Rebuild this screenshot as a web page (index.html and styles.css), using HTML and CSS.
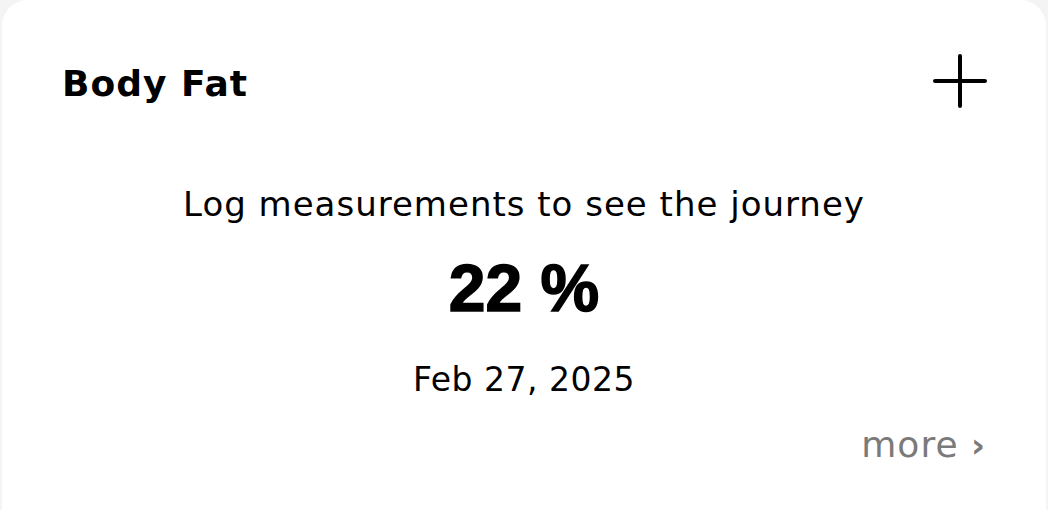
FILE: index.html
```html
<!DOCTYPE html>
<html>
<head>
<meta charset="utf-8">
<link rel="stylesheet" href="styles.css">
</head>
<body>
<div class="card">
  <div class="header">
    <h1 class="title">Body Fat</h1>
    <button class="add" aria-label="Add">
      <svg width="54" height="54" viewBox="0 0 54 54"><path d="M27 2V52M2 27H52" stroke="#000" stroke-width="4" stroke-linecap="round" fill="none"/></svg>
    </button>
  </div>
  <div class="body">
    <p class="hint">Log measurements to see the journey</p>
    <p class="value">22 %</p>
    <p class="date">Feb 27, 2025</p>
  </div>
  <div class="footer">
    <span class="more">more <span class="chev">›</span></span>
  </div>
</div>
</body>
</html>
```
FILE: styles.css
```css
html, body {
  margin: 0;
  padding: 0;
  background: #f4f4f4;
  overflow: hidden;
}
body {
  font-family: "DejaVu Sans", "Open Sans", sans-serif;
  color: #000;
}
.card {
  margin: 0 2px;
  height: 560px;
  background: #fff;
  border-radius: 26px;
  box-sizing: border-box;
  padding: 54px 60px 0 60px;
  display: flex;
  flex-direction: column;
}
.header {
  display: flex;
  justify-content: space-between;
  align-items: center;
  height: 54px;
}
.title {
  margin: 0;
  font-size: 36px;
  font-weight: 700;
  letter-spacing: 1px;
  line-height: 54px;
  padding-top: 6px;
}
.add {
  border: 0;
  background: none;
  padding: 0;
  width: 54px;
  height: 54px;
  margin-right: -1px;
}
.add svg { display: block; }
.body {
  display: flex;
  flex-direction: column;
  align-items: center;
  margin-top: 74px;
}
.hint {
  margin: 0;
  font-size: 34px;
  letter-spacing: 1px;
  line-height: 44px;
}
.value {
  margin: 28px 0 0;
  font-family: "Liberation Sans", "Arial", sans-serif;
  font-size: 66px;
  font-weight: 700;
  line-height: 68px;
  -webkit-text-stroke: 1.5px #000;
}
.date {
  margin: 36px 0 0;
  font-size: 33px;
  letter-spacing: 0.5px;
  line-height: 44px;
}
.footer {
  display: flex;
  justify-content: flex-end;
  margin-top: 21px;
}
.more {
  color: #7a7a7a;
  font-size: 36px;
  letter-spacing: 1px;
  line-height: 44px;
}
.chev { font-size: 34px; font-weight: 700; }
```
